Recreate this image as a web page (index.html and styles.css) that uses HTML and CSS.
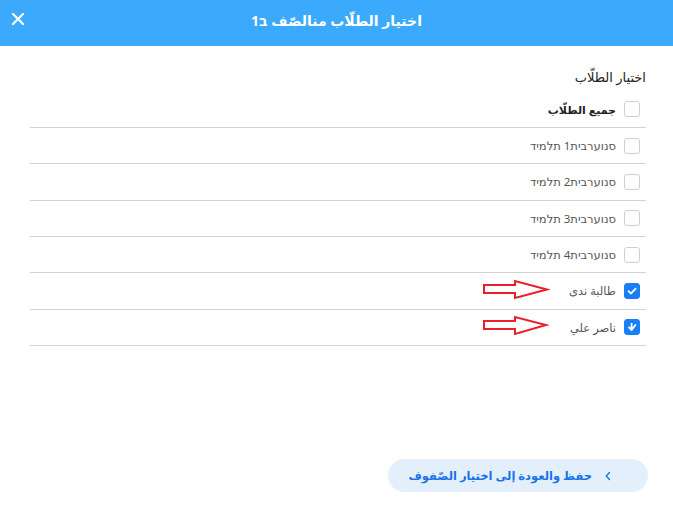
FILE: index.html
```html
<!DOCTYPE html>
<html lang="ar" dir="rtl">
<head>
<meta charset="utf-8">
<title>اختيار الطلّاب</title>
<link rel="stylesheet" href="styles.css">
</head>
<body>
<div class="modal">
  <header class="modal-header">
    <h1 class="modal-title">اختيار الطلّاب منالصّف ב1</h1>
    <button class="close-btn" aria-label="إغلاق">
      <svg width="14" height="14" viewBox="0 0 14 14"><path d="M2 2 L12 12 M12 2 L2 12" stroke="#fff" stroke-width="2.2" stroke-linecap="round"/></svg>
    </button>
  </header>

  <main class="modal-body">
    <h2 class="section-title">اختيار الطلّاب</h2>
    <ul class="student-list">
      <li class="student-row all-row">
        <span class="checkbox"></span>
        <span class="student-name bold">جميع الطلّاب</span>
      </li>
      <li class="student-row">
        <span class="checkbox"></span>
        <span class="student-name">סנוערבית1 תלמיד</span>
      </li>
      <li class="student-row">
        <span class="checkbox"></span>
        <span class="student-name">סנוערבית2 תלמיד</span>
      </li>
      <li class="student-row">
        <span class="checkbox"></span>
        <span class="student-name">סנוערבית3 תלמיד</span>
      </li>
      <li class="student-row">
        <span class="checkbox"></span>
        <span class="student-name">סנוערבית4 תלמיד</span>
      </li>
      <li class="student-row">
        <span class="checkbox checked">
          <svg width="10" height="10" viewBox="0 0 10 10"><path d="M1.5 5.2 L4 7.5 L8.6 2.6" fill="none" stroke="#fff" stroke-width="1.8" stroke-linecap="round" stroke-linejoin="round"/></svg>
        </span>
        <span class="student-name">طالبة ندى</span>
        <svg class="pointer-arrow" width="68" height="22" viewBox="0 0 68 22"><path d="M2 6 H33 V2 L65 10.5 L33 19 V14 H2 Z" fill="none" stroke="#e8202a" stroke-width="2" stroke-linejoin="miter"/></svg>
      </li>
      <li class="student-row">
        <span class="checkbox checked">
          <svg width="10" height="10" viewBox="0 0 10 10"><path d="M2 5.4 L4.6 8 L8.4 3 M4.6 8 V1.6" fill="none" stroke="#fff" stroke-width="1.8" stroke-linecap="round" stroke-linejoin="round"/></svg>
        </span>
        <span class="student-name">ناصر علي</span>
        <svg class="pointer-arrow" width="68" height="22" viewBox="0 0 68 22"><path d="M2 6 H33 V2 L64 10 L33 19 V14 H2 Z" fill="none" stroke="#e8202a" stroke-width="2" stroke-linejoin="miter"/></svg>
      </li>
    </ul>
  </main>

  <footer class="modal-footer">
    <button class="save-btn">
      <svg class="chevron" width="8" height="10" viewBox="0 0 8 10"><path d="M5.5 1.5 L2.2 5 L5.5 8.5" fill="none" stroke="#1a73e8" stroke-width="1.4" stroke-linecap="round" stroke-linejoin="round"/></svg>
      <span>حفظ والعودة إلى اختيار الصّفوف</span>
    </button>
  </footer>
</div>
</body>
</html>
```
FILE: styles.css
```css
* {
  box-sizing: border-box;
}

html, body {
  margin: 0;
  padding: 0;
  background: #fff;
}

body {
  font-family: "Noto Sans", "DejaVu Sans", sans-serif;
  color: #333;
  width: 673px;
  height: 510px;
  overflow: hidden;
}

.modal {
  display: flex;
  flex-direction: column;
  height: 510px;
}

/* blue title bar */
.modal-header {
  position: relative;
  height: 46px;
  background: #3ba9fc;
  display: flex;
  align-items: center;
  justify-content: center;
}

.modal-title {
  margin: 0;
  font-size: 14px;
  font-weight: 700;
  color: #fff;
  line-height: 1;
  padding-bottom: 4px;
}

.close-btn {
  position: absolute;
  left: 11px;
  top: 12px;
  width: 14px;
  height: 14px;
  padding: 0;
  border: 0;
  background: none;
  display: flex;
}

/* list area */
.modal-body {
  flex: 1;
  padding: 21px 27px 0 30px;
}

.section-title {
  margin: 0 0 3px;
  font-size: 13px;
  font-weight: 400;
  color: #222;
  line-height: 21px;
}

.student-list {
  list-style: none;
  margin: 0;
  padding: 0;
}

.student-row {
  position: relative;
  display: flex;
  align-items: center;
  gap: 8px;
  height: 36.33px;
  padding-right: 6px;
  border-bottom: 1px solid #d3d3d3;
}

.student-row.all-row {
  height: 37px;
}

.checkbox {
  width: 16px;
  height: 16px;
  border: 1px solid #cfcfcf;
  border-radius: 3px;
  background: #fff;
  display: flex;
  align-items: center;
  justify-content: center;
  flex: none;
}

.checkbox.checked {
  background: #1a7ff5;
  border-color: #1a7ff5;
}

.student-name {
  font-size: 11.5px;
  color: #555;
}

.student-name.bold {
  font-weight: 700;
  font-size: 11px;
  color: #222;
}

.pointer-arrow {
  position: absolute;
  left: 452px;
  top: 50%;
  margin-top: -12px;
}

/* bottom action */
.modal-footer {
  display: flex;
  justify-content: flex-start;
  padding: 0 25px 18px 0;
}

.save-btn {
  display: flex;
  align-items: center;
  gap: 12px;
  width: 260px;
  height: 33px;
  padding: 0 36px 0 0;
  border: 0;
  border-radius: 17px;
  background: #e3f0fc;
  font-family: "Noto Sans", "DejaVu Sans", sans-serif;
  font-size: 11.5px;
  font-weight: 700;
  color: #1a73e8;
}
```
